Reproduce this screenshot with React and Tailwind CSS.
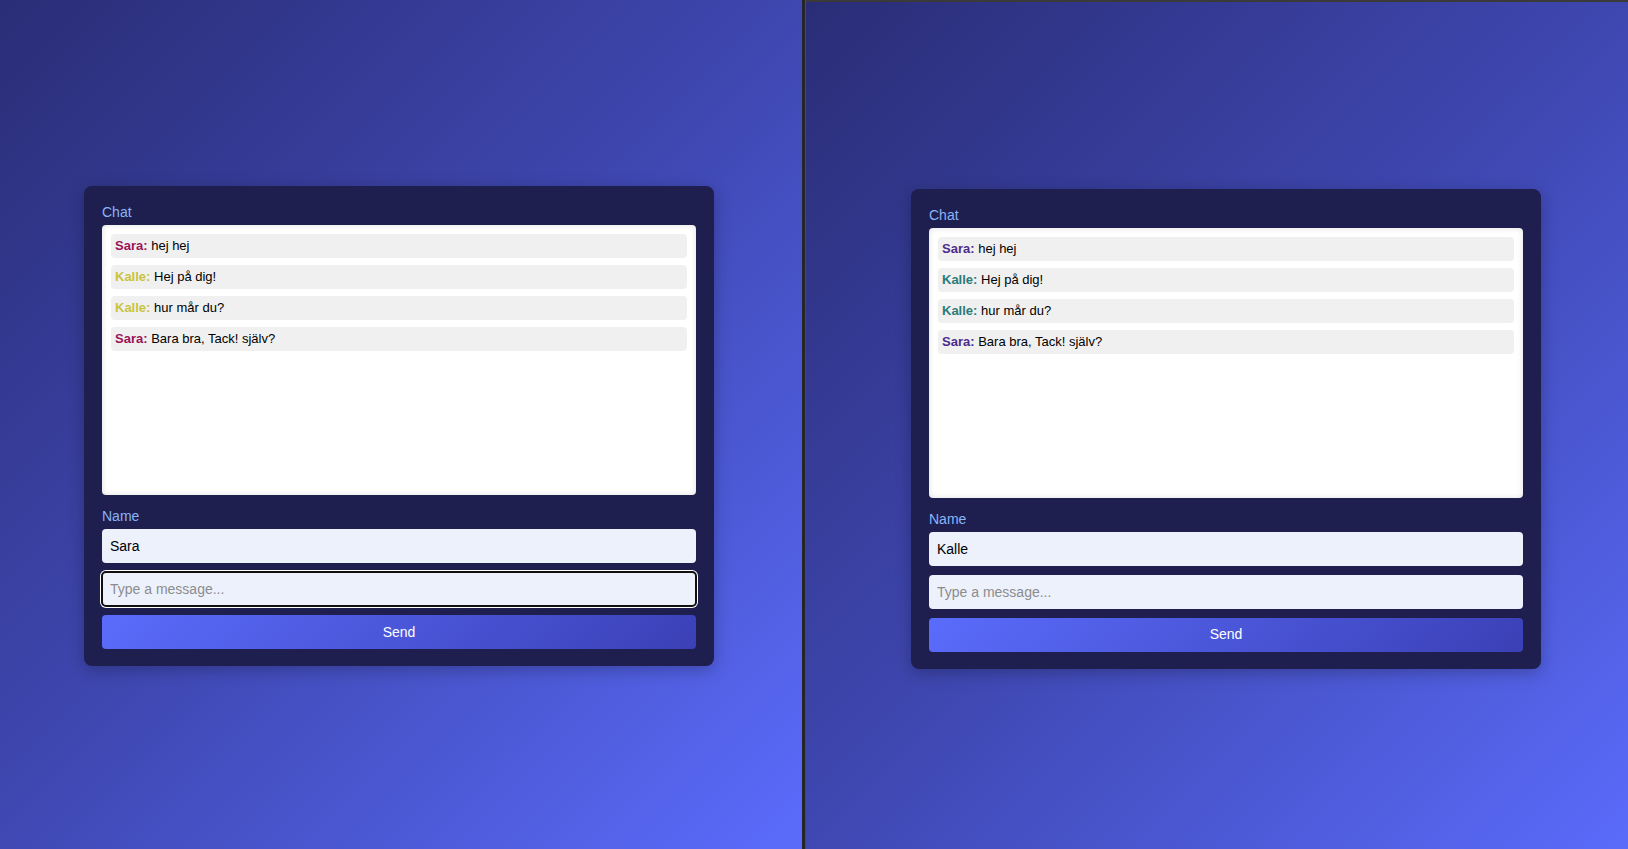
import { useState } from 'react'

const messages = [
    { name: 'Sara', text: 'hej hej' },
    { name: 'Kalle', text: 'Hej på dig!' },
    { name: 'Kalle', text: 'hur mår du?' },
    { name: 'Sara', text: 'Bara bra, Tack! själv?' },
]

function ChatCard({ userName, colors, focused }) {
    const [name, setName] = useState(userName)
    const [msg, setMsg] = useState('')

    return (
        <div className="w-[630px] rounded-[8px] bg-[#1e1f4f] px-[18px] pt-[18px] pb-[17px] shadow-[0_4px_16px_rgba(0,0,0,0.25)]">
            <label className="block mb-[5px] text-[14px] leading-[16px] text-[#8ab4f8]">Chat</label>
            <div className="h-[270px] mb-[13px] rounded-[4px] bg-white p-[9px] flex flex-col gap-[7px] shadow-[inset_0_0_6px_rgba(0,0,0,0.12)]">
                {messages.map((m, i) => (
                    <div key={i} className="h-[24px] rounded-[4px] bg-[#f0f0f0] px-[4px] py-[4px] text-[13px] leading-[16px] text-black">
                        <span className="font-bold" style={{ color: colors[m.name] }}>{m.name}:</span> {m.text}
                    </div>
                ))}
            </div>
            <label className="block mb-[5px] text-[14px] leading-[16px] text-[#8ab4f8]">Name</label>
            <input
                value={name}
                onChange={(e) => setName(e.target.value)}
                className="block w-full h-[34px] mb-[9px] rounded-[4px] bg-[#edf1fc] px-[8px] text-[14px] text-black outline-none"
            />
            <input
                value={msg}
                onChange={(e) => setMsg(e.target.value)}
                placeholder="Type a message..."
                className={
                    focused
                        ? 'block w-full h-[34px] mb-[9px] rounded-[4px] bg-[#edf1fc] px-[8px] text-[14px] text-black placeholder:text-[#8c8c8c] outline-2 outline-[#101010] outline-offset-[-1px] shadow-[0_0_0_2px_white]'
                        : 'block w-full h-[34px] mb-[9px] rounded-[4px] bg-[#edf1fc] px-[8px] text-[14px] text-black placeholder:text-[#8c8c8c] outline-none'
                }
            />
            <button className="block w-full h-[34px] rounded-[4px] bg-[linear-gradient(135deg,#5a6cfb,#3b40b6)] text-[14px] text-white">
                Send
            </button>
        </div>
    )
}

export default function App() {
    return (
        <div className="flex h-[849px] w-[1628px] overflow-hidden bg-[#2b2b2b] font-['Liberation_Sans',Arial,sans-serif]">
            <div className="w-[802px] shrink-0 flex items-center justify-center pr-[4px] pt-[3px] bg-[linear-gradient(135deg,#2a2d76,#3f48b2_50%,#5b6cfc)]">
                <ChatCard userName="Sara" colors={{ Sara: '#9c1458', Kalle: '#c9c33d' }} focused />
            </div>
            <div className="w-[3px] shrink-0 bg-[#262626]" />
            <div className="w-[1px] shrink-0 bg-[#4a4a4a]" />
            <div className="w-[840px] shrink-0 flex flex-col">
                <div className="h-[2px] bg-[#3a3a3a]" />
                <div className="flex-1 flex items-center justify-center pt-[6px] bg-[linear-gradient(135deg,#2a2d76,#3f48b2_50%,#5b6cfc)]">
                    <ChatCard userName="Kalle" colors={{ Sara: '#4b2c8c', Kalle: '#2b7b79' }} />
                </div>
            </div>
        </div>
    )
}
